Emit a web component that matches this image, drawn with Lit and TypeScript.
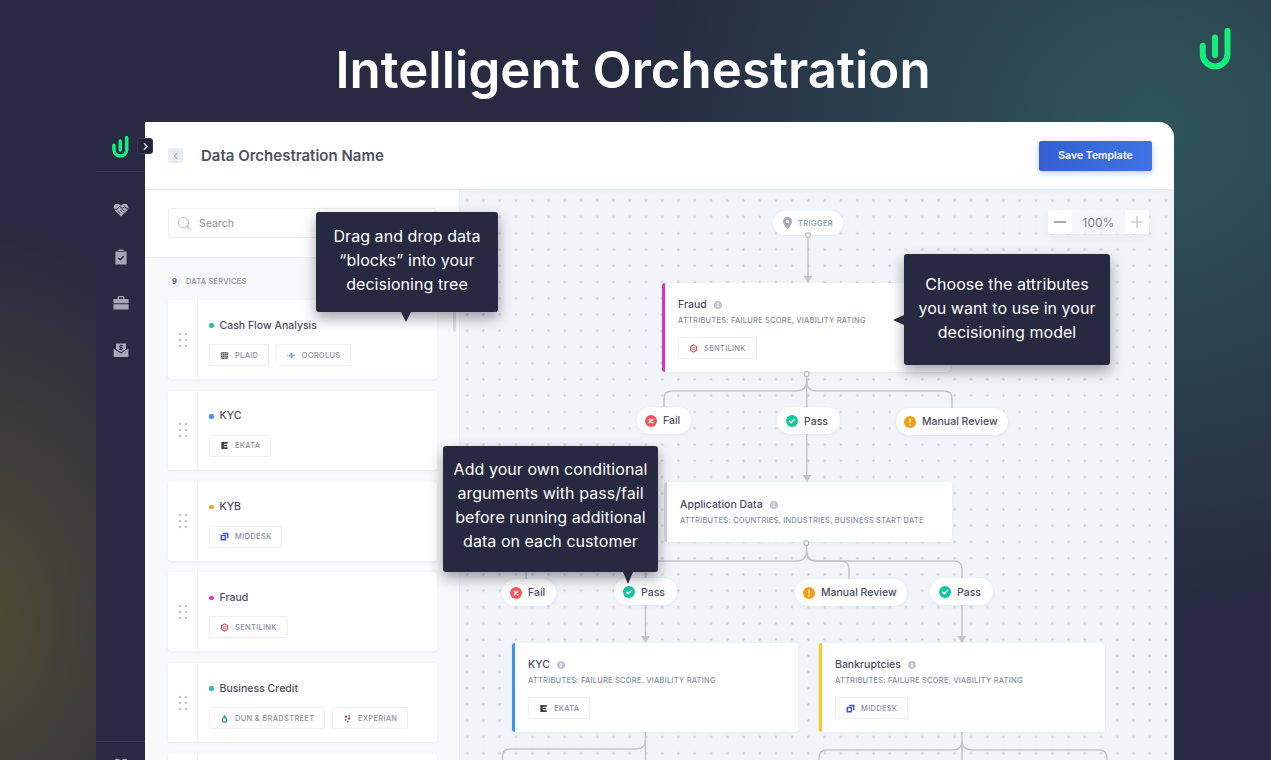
import { LitElement, html, css, svg } from "lit";
import { customElement } from "lit/decorators.js";

type Ic = "plaid" | "ocrolus" | "ekata" | "middesk" | "sentilink" | "dnb" | "experian";
type Chip = { ic: Ic; label: string };

const chipIcon = (i: Ic) => {
  switch (i) {
    case "plaid":
      return svg`<rect x="1" y="1" width="8" height="8" rx="1.5" fill="#55565f"/><path d="M3 1v8M5 1v8M7 1v8M1 3h8M1 5h8M1 7h8" stroke="#c9c9cf" stroke-width=".6"/>`;
    case "ocrolus":
      return svg`<path d="M0 5h10" stroke="#9cc4f2" stroke-width="1.4" stroke-dasharray="1.2 .8"/><path d="M5 2v6" stroke="#5d9cec" stroke-width="2"/><path d="M3 3.5v3M7 3.5v3" stroke="#8ab8f0" stroke-width="1.2"/>`;
    case "ekata":
      return svg`<path d="M1.5 1H8.5V3H4.2V4.1H8V5.9H4.2V7H8.5V9H1.5Z" fill="#3a3a40"/>`;
    case "middesk":
      return svg`<path d="M3.5 .8H9.4V7H7.8V2.4H3.5Z" fill="#3f57c0"/><path d="M.6 3H6.8V9.4H.6Z M2.3 4.7V7.7H5.1V4.7Z" fill="#3f57c0" fill-rule="evenodd"/>`;
    case "sentilink":
      return svg`<path d="M5 1 8.4 2.9V7L5 9 1.6 7V3L5 1Z" fill="none" stroke="#e0485f" stroke-width="1.2"/><path d="M3.4 4.2 6.4 3.8 6.6 6 3.6 6.2Z" fill="none" stroke="#ea7083" stroke-width="1"/>`;
    case "dnb":
      return svg`<circle cx="5" cy="6.6" r="2.5" fill="none" stroke="#2e8fa3" stroke-width="1.3"/><path d="M5 .8 7 3.6H3Z" fill="#4a86b8"/>`;
    case "experian":
      return svg`<circle cx="3.2" cy="3" r="1.2" fill="#5b3a94"/><circle cx="6.8" cy="2" r="1" fill="#7b4aa8"/><circle cx="6.6" cy="5" r="1.3" fill="#c0336f"/><circle cx="3" cy="6.4" r="1.1" fill="#8a52b0"/><circle cx="5.4" cy="8.4" r="1" fill="#3f70b8"/>`;
  }
};

const info = () => html`<svg class="info" viewBox="0 0 8 8"><circle cx="4" cy="4" r="4" fill="#c1c4cc"/><rect x="3.4" y="3.3" width="1.2" height="3" fill="#fff"/><rect x="3.4" y="1.6" width="1.2" height="1.1" fill="#fff"/></svg>`;

const chipEl = (c: Chip) => html`<span class="chip"><svg class="cic" viewBox="0 0 10 10">${chipIcon(c.ic)}</svg>${c.label}</span>`;

const logo = (cls: string) => html`<svg class=${cls} viewBox="0 0 32 42" fill="none" stroke="#14ee7a" stroke-linecap="round"><path d="M3.75 17.8V26.8A12.4 12.4 0 0 0 28.5 26.8V2.75"/><path d="M16 9.6V27"/></svg>`;

const services: { name: string; color: string; chips: Chip[] }[] = [
  { name: "Cash Flow Analysis", color: "#14c6a0", chips: [{ ic: "plaid", label: "PLAID" }, { ic: "ocrolus", label: "OCROLUS" }] },
  { name: "KYC", color: "#3d92ee", chips: [{ ic: "ekata", label: "EKATA" }] },
  { name: "KYB", color: "#f6a313", chips: [{ ic: "middesk", label: "MIDDESK" }] },
  { name: "Fraud", color: "#dc2fc6", chips: [{ ic: "sentilink", label: "SENTILINK" }] },
  { name: "Business Credit", color: "#28b4c8", chips: [{ ic: "dnb", label: "DUN & BRADSTREET" }, { ic: "experian", label: "EXPERIAN" }] },
  { name: "", color: "transparent", chips: [] },
];

const OX = 460;
const OY = 190;

const nodes = [
  { x: 662, y: 283, w: 288, h: 89, pad: 15, bar: "#d92fcb", name: "Fraud", attrs: "ATTRIBUTES: FAILURE SCORE, VIABILITY RATING", chip: { ic: "sentilink", label: "SENTILINK" } as Chip },
  { x: 664, y: 482, w: 288, h: 60, pad: 16, bar: "#d3d6dd", name: "Application Data", attrs: "ATTRIBUTES: COUNTRIES, INDUSTRIES, BUSINESS START DATE", chip: null },
  { x: 512, y: 643, w: 286, h: 89, pad: 15, bar: "#3d92f2", name: "KYC", attrs: "ATTRIBUTES: FAILURE SCORE, VIABILITY RATING", chip: { ic: "ekata", label: "EKATA" } as Chip },
  { x: 819, y: 643, w: 286, h: 89, pad: 15, bar: "#fbc81f", name: "Bankruptcies", attrs: "ATTRIBUTES: FAILURE SCORE, VIABILITY RATING", chip: { ic: "middesk", label: "MIDDESK" } as Chip },
];

type St = "fail" | "pass" | "review";
const pills: { x: number; y: number; s: St }[] = [
  { x: 637, y: 407, s: "fail" },
  { x: 777, y: 407, s: "pass" },
  { x: 896, y: 408, s: "review" },
  { x: 502, y: 579, s: "fail" },
  { x: 614, y: 578, s: "pass" },
  { x: 795, y: 579, s: "review" },
  { x: 930, y: 578, s: "pass" },
];
const stLabel: Record<St, string> = { fail: "Fail", pass: "Pass", review: "Manual Review" };

const stIcon = (s: St) => {
  if (s === "fail")
    return html`<svg class="st" viewBox="0 0 12 12"><circle cx="6" cy="6" r="6" fill="#f4565f"/><path d="M4.2 4.2 7.8 7.8M7.8 4.2 4.2 7.8" stroke="#fff" stroke-width="1.4" stroke-linecap="round"/></svg>`;
  if (s === "pass")
    return html`<svg class="st" viewBox="0 0 12 12"><circle cx="6" cy="6" r="6" fill="#12c79b"/><path d="M3.6 6.2 5.3 7.7 8.4 4.6" fill="none" stroke="#fff" stroke-width="1.4" stroke-linecap="round" stroke-linejoin="round"/></svg>`;
  return html`<svg class="st" viewBox="0 0 12 12"><circle cx="6" cy="6" r="6" fill="#f79c0e"/><rect x="5.3" y="2.6" width="1.4" height="4.4" rx=".7" fill="#fff"/><circle cx="6" cy="8.6" r=".85" fill="#fff"/></svg>`;
};

const arrow = (x: number, y: number) => svg`<path d="M${x - 4.5} ${y - 7}H${x + 4.5}L${x} ${y}Z" fill="#c2c5cc" stroke="none"/>`;
const joint = (x: number, y: number) => svg`<circle cx=${x} cy=${y} r="2.4" fill="#fff" stroke="#b4b8c0" stroke-width="1.1"/>`;

@customElement("app-root")
export class AppRoot extends LitElement {
  static styles = css`
    :host {
      display: flex;
      flex-direction: column;
      width: 1271px;
      height: 760px;
      overflow: hidden;
      position: relative;
      font-family: Inter, "Noto Sans", sans-serif;
      background:
        radial-gradient(ellipse 520px 480px at 1150px 130px, rgba(47, 88, 92, 0.95), rgba(47, 88, 92, 0) 100%),
        radial-gradient(ellipse 300px 400px at -30px 620px, rgba(88, 82, 50, 0.85), rgba(88, 82, 50, 0) 100%),
        #272a40;
    }
    .hero {
      height: 122px;
      flex: none;
      display: grid;
      grid-template-columns: 1fr auto 1fr;
      padding-right: 5px;
    }
    h1 {
      grid-column: 2;
      margin: 0;
      padding-top: 37px;
      font-size: 51px;
      line-height: 66px;
      font-weight: 600;
      color: #fff;
      letter-spacing: 0;
      white-space: nowrap;
    }
    .hero-logo {
      grid-column: 3;
      justify-self: end;
      width: 32px;
      height: 42px;
      margin: 28px 35px 0 0;
      stroke-width: 6;
    }
    .app {
      flex: 1;
      min-height: 0;
      display: flex;
      margin-left: 96px;
      width: 1078px;
    }
    .side {
      width: 49px;
      flex: none;
      background: #282a44;
      display: flex;
      flex-direction: column;
      align-items: center;
      position: relative;
    }
    .side-top {
      height: 49px;
      width: 100%;
      border-bottom: 1px solid #3a3c54;
      display: flex;
      align-items: center;
      justify-content: center;
    }
    .side-logo { width: 16.5px; height: 22px; margin-top: 1px; stroke-width: 6.8; }
    .expand {
      position: absolute;
      left: 41px;
      top: 16px;
      width: 16px;
      height: 16px;
      border-radius: 3px;
      background: #23253b;
      border: 1px solid #33364e;
      box-sizing: border-box;
      display: flex;
      align-items: center;
      justify-content: center;
      z-index: 3;
    }
    .expand svg { width: 9px; height: 9px; }
    .nav {
      display: flex;
      flex-direction: column;
      align-items: center;
      gap: 30.5px;
      padding-top: 30px;
      flex: 1;
    }
    .nav svg { width: 16px; height: 16px; display: block; }
    .side-bottom {
      height: 19px;
      width: 100%;
      border-top: 1px solid #3a3c54;
      display: flex;
      justify-content: center;
      padding-top: 15px;
      box-sizing: border-box;
    }
    .side-bottom svg { width: 16px; height: 16px; flex: none; }
    .main {
      flex: 1;
      min-width: 0;
      background: #fff;
      border-top-right-radius: 15px;
      display: flex;
      flex-direction: column;
      overflow: hidden;
    }
    .topbar {
      height: 67px;
      flex: none;
      display: flex;
      align-items: center;
      padding: 0 22px 0 23px;
      border-bottom: 1px solid #e9ebf0;
      box-shadow: 0 1px 3px rgba(60, 70, 90, 0.05);
      position: relative;
      z-index: 2;
    }
    .back {
      width: 15px;
      height: 15px;
      background: #e9edf3;
      border-radius: 2px;
      display: flex;
      align-items: center;
      justify-content: center;
      margin-right: 18px;
    }
    .back svg { width: 8px; height: 8px; }
    .title {
      font-size: 15px;
      line-height: 18px;
      font-weight: 600;
      color: #4f5162;
      flex: 1;
    }
    .save {
      width: 113px;
      height: 30px;
      border: 0;
      border-radius: 2px;
      background: linear-gradient(90deg, #3361d2, #3f74e2);
      color: #fff;
      font: 600 10.5px Inter, sans-serif;
      box-shadow: 0 2px 6px rgba(60, 105, 225, 0.35);
      padding: 0;
    }
    .body { flex: 1; min-height: 0; display: flex; }
    .panel {
      width: 315px;
      flex: none;
      display: flex;
      flex-direction: column;
      background: #f8f9fb;
      border-right: 1px solid #eceef2;
      box-sizing: border-box;
      position: relative;
    }
    .search-wrap {
      height: 68px;
      flex: none;
      background: #fff;
      border-bottom: 1px solid #eef0f3;
      box-sizing: border-box;
      padding: 18px 23px 0;
    }
    .search {
      width: 268px;
      height: 30px;
      box-sizing: border-box;
      border: 1px solid #eef0f3;
      border-radius: 2px;
      display: flex;
      align-items: center;
      gap: 7px;
      padding-left: 8px;
      font-size: 10.5px;
      color: #8c8f9e;
    }
    .search svg { width: 15px; height: 15px; }
    .svc-head {
      display: flex;
      align-items: center;
      gap: 5px;
      padding: 4px 0 0 23px;
      height: 38px;
      flex: none;
      box-sizing: content-box;
      font-size: 7.5px;
      font-weight: 500;
      letter-spacing: 0.22px;
      color: #8d90a0;
    }
    .badge {
      width: 13px;
      height: 13px;
      border-radius: 50%;
      background: #eceff5;
      color: #5d6070;
      font-size: 7.5px;
      font-weight: 600;
      display: flex;
      align-items: center;
      justify-content: center;
      letter-spacing: 0;
    }
    .list {
      display: flex;
      flex-direction: column;
      gap: 11.75px;
      padding-left: 23px;
    }
    .card {
      width: 269px;
      height: 79px;
      flex: none;
      background: #fff;
      border-radius: 3px;
      box-shadow: 0 1px 3px rgba(60, 70, 90, 0.07);
      display: flex;
    }
    .grip {
      width: 29px;
      flex: none;
      border-right: 1px solid #f0f1f4;
      display: flex;
      align-items: center;
      justify-content: center;
      box-sizing: content-box;
    }
    .grip svg { width: 10px; height: 16px; }
    .card-body {
      padding: 18.5px 0 0 11px;
      display: flex;
      flex-direction: column;
      gap: 11.5px;
    }
    .card-title {
      display: flex;
      align-items: center;
      gap: 6px;
      font-size: 10.5px;
      line-height: 14px;
      font-weight: 500;
      color: #4c4e5f;
    }
    .dot { width: 4.5px; height: 4.5px; border-radius: 50%; }
    .chips { display: flex; gap: 6.5px; }
    .chip {
      height: 22px;
      box-sizing: border-box;
      border: 1px solid #f0f1f4;
      border-radius: 2px;
      background: #fff;
      display: inline-flex;
      align-items: center;
      gap: 6px;
      padding: 0 10px 0 10px;
      font-size: 7.5px;
      font-weight: 500;
      letter-spacing: 0.3px;
      color: #8d90a0;
      white-space: nowrap;
    }
    .cic { width: 9px; height: 9px; flex: none; }
    .scroll {
      position: absolute;
      left: 308px;
      top: 110px;
      width: 3px;
      height: 32px;
      background: #dfe1e6;
      border-radius: 2px;
    }
    .canvas {
      flex: 1;
      min-width: 0;
      position: relative;
      background-color: #f1f4f8;
      background-image: radial-gradient(circle at center, #d3d7dd 0, #d3d7dd 1px, rgba(211, 215, 221, 0) 1.6px);
      background-size: 16.25px 16.25px;
      background-position: -0.9px 2.6px;
      overflow: hidden;
    }
    .lines { position: absolute; left: 0; top: 0; width: 714px; height: 570px; }
    .trigger {
      position: absolute;
      left: 313px;
      top: 21px;
      width: 70px;
      height: 24px;
      border-radius: 12px;
      background: #fff;
      display: flex;
      align-items: center;
      justify-content: center;
      gap: 6px;
      font-size: 7.5px;
      font-weight: 500;
      letter-spacing: 0.4px;
      color: #8d90a0;
      box-shadow: 0 1px 3px rgba(60, 70, 90, 0.05);
    }
    .trigger svg { width: 9px; height: 12px; }
    .node {
      position: absolute;
      box-sizing: border-box;
      background: #fff;
      border-radius: 3px;
      border-left: 3px solid;
      padding: 0 0 0 13px;
      display: flex;
      flex-direction: column;
      align-items: flex-start;
      box-shadow: 0 1px 4px rgba(60, 70, 90, 0.06);
    }
    .node-title {
      display: flex;
      align-items: center;
      gap: 7px;
      font-size: 10.5px;
      line-height: 14px;
      font-weight: 500;
      color: #4c4e5f;
    }
    .info { width: 8px; height: 8px; }
    .attrs {
      margin-top: 4px;
      font-size: 7.5px;
      line-height: 10px;
      font-weight: 500;
      letter-spacing: 0.22px;
      color: #8d90a0;
      white-space: nowrap;
    }
    .node .chip { margin-top: 11px; }
    .pill {
      position: absolute;
      height: 27px;
      border-radius: 14px;
      background: #fff;
      box-sizing: border-box;
      padding: 0 11px 0 8px;
      display: flex;
      align-items: center;
      gap: 6px;
      font-size: 10.5px;
      font-weight: 500;
      color: #4c4e5f;
      box-shadow: 0 1px 4px rgba(60, 70, 90, 0.07);
    }
    .pass { padding: 1px 12px 0 9px; }
    .review { padding-left: 8px; padding-right: 10px; }
    .st { width: 12px; height: 12px; flex: none; }
    .zoom {
      position: absolute;
      left: 588px;
      top: 20px;
      width: 101px;
      height: 24px;
      display: flex;
      align-items: center;
      justify-content: space-between;
      font-size: 12px;
      color: #7d8090;
      background: rgba(246, 247, 250, 0.7);
      box-shadow: 0 4px 8px rgba(60, 70, 90, 0.05);
    }
    .zb {
      width: 24px;
      height: 24px;
      background: #fff;
      border-radius: 2px;
      display: flex;
      align-items: center;
      justify-content: center;
    }
    .zb svg { width: 14px; height: 14px; }
    .tip {
      position: absolute;
      background: #262940;
      color: #fff;
      border-radius: 3px;
      font-size: 16px;
      letter-spacing: 0.05px;
      line-height: 24px;
      font-weight: 400;
      text-align: center;
      box-sizing: border-box;
      display: flex;
      align-items: center;
      justify-content: center;
      z-index: 5;
      box-shadow: 0 6px 14px rgba(20, 22, 40, 0.4);
    }
    .tip::after {
      content: "";
      position: absolute;
      width: 0;
      height: 0;
      border: 5.5px solid transparent;
    }
    .t1 { left: 316px; top: 212px; width: 182px; height: 100px; padding-bottom: 4px; }
    .t1::after { left: 85px; top: 100px; border-top: 10px solid #262940; border-bottom: 0; }
    .t2 { left: 904px; top: 254px; width: 206px; height: 111px; padding-bottom: 4px; }
    .t2::after { left: -11px; top: 61px; border-right: 11px solid #262940; border-left: 0; }
    .t3 { left: 443px; top: 446px; width: 215px; height: 126px; padding-bottom: 8px; }
    .t3::after { left: 180px; top: 126px; border-top: 12px solid #262940; border-bottom: 0; }
  `;

  render() {
    return html`
      <header class="hero">
        <h1>Intelligent Orchestration</h1>
        ${logo("hero-logo")}
      </header>
      <div class="app">
        <aside class="side">
          <div class="side-top">${logo("side-logo")}</div>
          <div class="expand">
            <svg viewBox="0 0 8 8" fill="none" stroke="#c9cad3" stroke-width="1.3" stroke-linecap="round" stroke-linejoin="round"><path d="M3 1.5 5.5 4 3 6.5"/></svg>
          </div>
          <nav class="nav">
            <svg viewBox="0 0 16 16"><path d="M8 14.6 1.6 8.2C-.4 6 .8 1.8 4.2 1.8c1.6 0 2.8.8 3.8 2 1-1.2 2.2-2 3.8-2 3.4 0 4.6 4.2 2.6 6.4Z" fill="#a6a7b6"/><path d="M.8 7.2 4 7.4 6.6 4.4 9 6.4 11.4 5 15.2 7.2M5 9.4 7 11.4M7.2 8 9.4 10.2M9.6 7.4 11.4 9.2" fill="none" stroke="#282a44" stroke-width="1"/></svg>
            <svg viewBox="0 0 16 16"><path d="M2.4 2.4H5.4V1.4C5.4.9 5.8.6 6.2.6H9.8C10.2.6 10.6.9 10.6 1.4V2.4H13.6V15.6H2.4Z" fill="#a6a7b6"/><path d="M5.2 2.6H10.8" stroke="#282a44" stroke-width=".7"/><path d="M5.4 9 7.3 10.8 10.8 7" fill="none" stroke="#282a44" stroke-width="1.5"/></svg>
            <svg viewBox="0 0 16 16"><path d="M5.2 4V2.6C5.2 2 5.6 1.6 6.2 1.6H9.8C10.4 1.6 10.8 2 10.8 2.6V4" fill="none" stroke="#a6a7b6" stroke-width="1.2"/><path d="M.4 4H15.6V8.2H.4Z M.4 9.2H15.6V14.4H.4Z" fill="#a6a7b6"/></svg>
            <svg viewBox="0 0 16 16"><path d="M3 7V1.4H13V7L8 10.2Z" fill="#a6a7b6"/><path d="M.6 6.6 8 11.4 15.4 6.6V15H.6Z" fill="#a6a7b6"/><path d="M9.8 3.6H7.2C6.2 3.6 6.2 5.4 7.2 5.4H8.8C9.8 5.4 9.8 7.2 8.8 7.2H6.2M8 2.6V8.2" fill="none" stroke="#282a44" stroke-width=".9"/></svg>
          </nav>
          <div class="side-bottom">
            <svg viewBox="0 0 16 16"><path d="M8 14.6 1.6 8.2C-.4 6 .8 1.8 4.2 1.8c1.6 0 2.8.8 3.8 2 1-1.2 2.2-2 3.8-2 3.4 0 4.6 4.2 2.6 6.4Z" fill="#a6a7b6"/></svg>
          </div>
        </aside>
        <main class="main">
          <div class="topbar">
            <div class="back"><svg viewBox="0 0 8 8" fill="none" stroke="#a9adb8" stroke-width="1.2" stroke-linecap="round" stroke-linejoin="round"><path d="M5 1.5 2.5 4 5 6.5"/></svg></div>
            <div class="title">Data Orchestration Name</div>
            <button class="save">Save Template</button>
          </div>
          <div class="body">
            <section class="panel">
              <div class="search-wrap">
                <div class="search">
                  <svg viewBox="0 0 15 15" fill="none" stroke="#c5c8cf" stroke-width="1.1"><circle cx="6.5" cy="6.5" r="5"/><path d="M10.2 10.2 14 14"/></svg>
                  Search
                </div>
              </div>
              <div class="svc-head"><span class="badge">9</span>DATA SERVICES</div>
              <div class="list">
                ${services.map(
                  (s) => html`<div class="card">
                    <div class="grip">
                      <svg viewBox="0 0 10 16" fill="#c6c8ce"><circle cx="2" cy="2" r="1.3"/><circle cx="8" cy="2" r="1.3"/><circle cx="2" cy="8" r="1.3"/><circle cx="8" cy="8" r="1.3"/><circle cx="2" cy="14" r="1.3"/><circle cx="8" cy="14" r="1.3"/></svg>
                    </div>
                    <div class="card-body">
                      <div class="card-title"><span class="dot" style="background:${s.color}"></span>${s.name}</div>
                      <div class="chips">${s.chips.map(chipEl)}</div>
                    </div>
                  </div>`
                )}
              </div>
              <div class="scroll"></div>
            </section>
            <section class="canvas">
              <svg class="lines" viewBox="${OX} ${OY} 714 570" fill="none" stroke="#c2c5cc" stroke-width="1.5">
                <path d="M808 238V277"/>
                <path d="M806.7 376V477"/>
                <path d="M806.7 381Q806.7 391 796 391H672Q664 391 664 399V408"/>
                <path d="M806.7 381Q806.7 391 817 391H944Q952 391 952 399V408"/>
                <path d="M806.5 544V551Q806.5 561 796 561H534Q526 561 526 569V580"/>
                <path d="M806.5 551Q806.5 561 817 561H841Q849 561 849 569V580"/>
                <path d="M806.5 551Q806.5 561 817 561H954Q962 561 962 569V637"/>
                <path d="M645.5 561V637"/>
                <path d="M645.5 732V760"/>
                <path d="M645.5 740Q645.5 749 636 749H510Q502.5 749 502.5 757V760"/>
                <path d="M962 732V760"/>
                <path d="M962 741Q962 750 952 750H827Q819 750 819 758V760"/>
                <path d="M962 741Q962 750 972 750H1099Q1107 750 1107 758V760"/>
                ${arrow(808, 283)} ${arrow(807, 482)} ${arrow(645.5, 643)} ${arrow(962, 643)}
              </svg>
              <div class="trigger">
                <svg viewBox="0 0 9 12"><path d="M4.5 0C2 0 0 2 0 4.5 0 7.5 4.5 12 4.5 12S9 7.5 9 4.5C9 2 7 0 4.5 0Z" fill="#a9acb6"/><circle cx="4.5" cy="4.4" r="1.7" fill="#fff"/></svg>
                TRIGGER
              </div>
              ${nodes.map(
                (n) => html`<div class="node" style="left:${n.x - OX}px;top:${n.y - OY}px;width:${n.w}px;height:${n.h}px;border-left-color:${n.bar};padding-top:${n.pad}px">
                  <div class="node-title">${n.name}${info()}</div>
                  <div class="attrs">${n.attrs}</div>
                  ${n.chip ? chipEl(n.chip) : ""}
                </div>`
              )}
              <svg class="lines" viewBox="${OX} ${OY} 714 570">
                ${joint(808, 235)} ${joint(806.7, 374)} ${joint(806.3, 543)}
              </svg>
              ${pills.map(
                (p) => html`<div class="pill ${p.s}" style="left:${p.x - OX}px;top:${p.y - OY}px">${stIcon(p.s)}${stLabel[p.s]}</div>`
              )}
              <div class="zoom">
                <span class="zb"><svg viewBox="0 0 14 14" stroke="#8a8d9a" stroke-width="1.5"><path d="M1 7H13"/></svg></span>
                100%
                <span class="zb"><svg viewBox="0 0 14 14" stroke="#b9bcc5" stroke-width="1.2"><path d="M1 7H13M7 1V13"/></svg></span>
              </div>
            </section>
          </div>
        </main>
      </div>
      <div class="tip t1">Drag and drop data<br />“blocks” into your<br />decisioning tree</div>
      <div class="tip t2">Choose the attributes<br />you want to use in your<br />decisioning model</div>
      <div class="tip t3">Add your own conditional<br />arguments with pass/fail<br />before running additional<br />data on each customer</div>
    `;
  }
}
